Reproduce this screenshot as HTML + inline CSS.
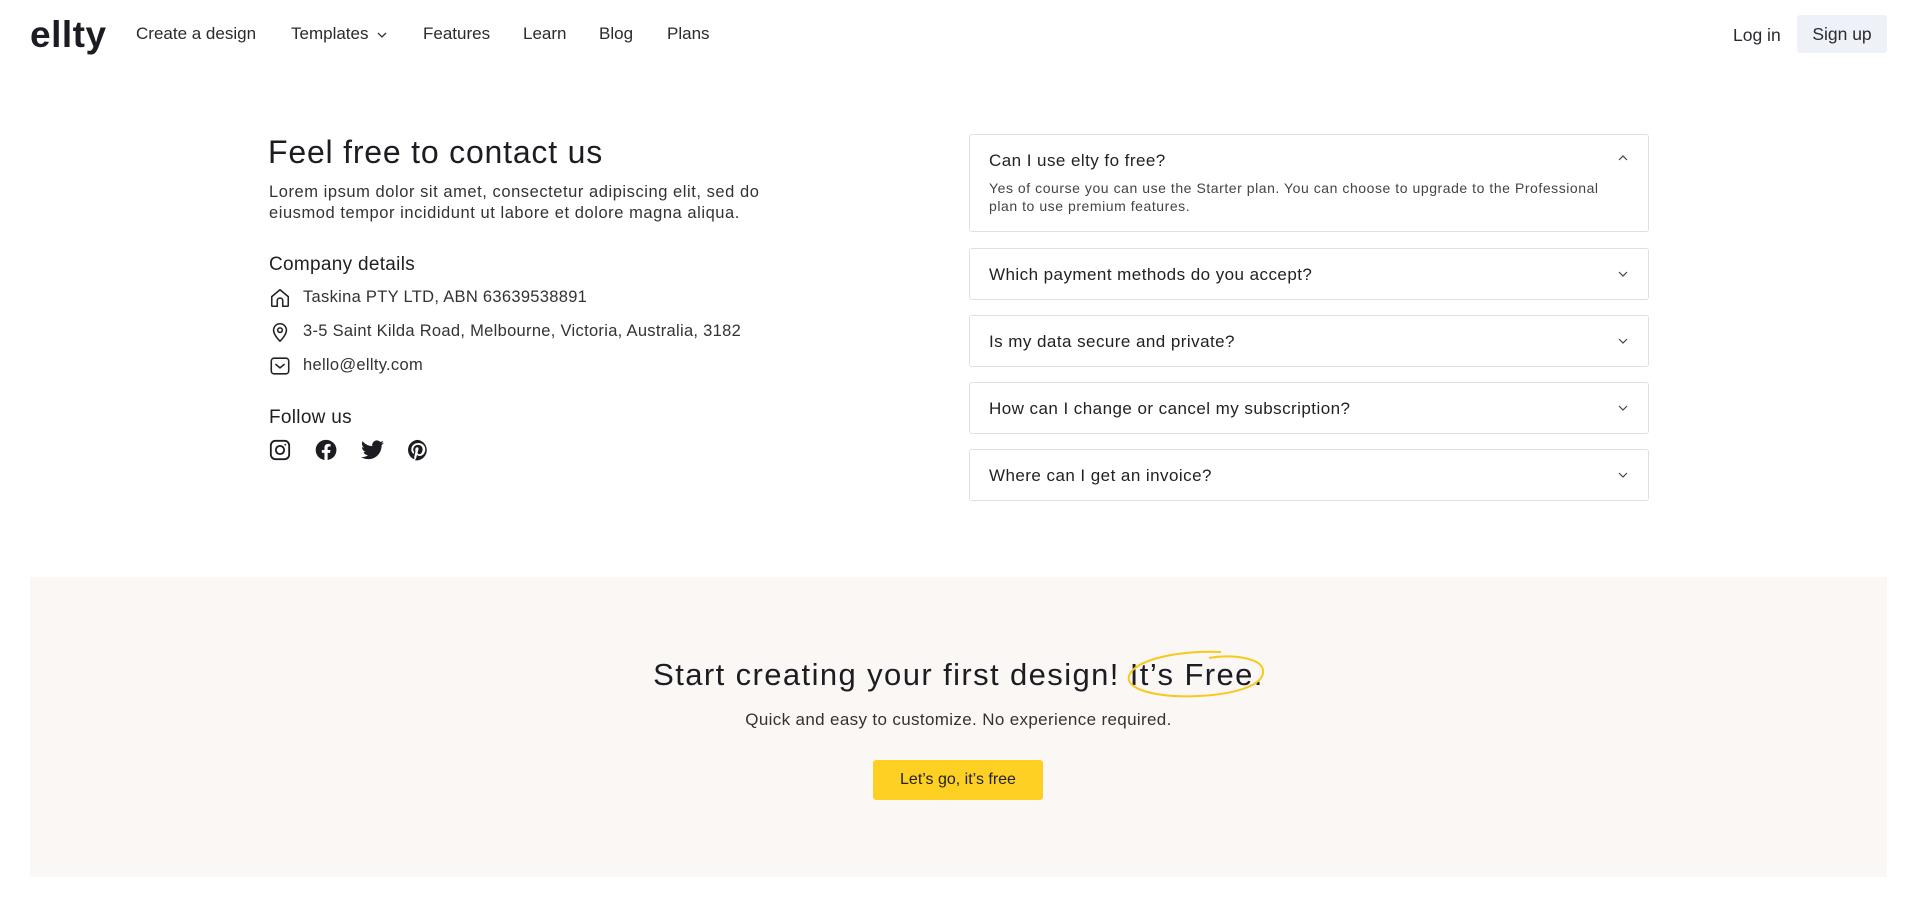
<!DOCTYPE html>
<html><head><meta charset="utf-8"><style>
*{margin:0;padding:0;box-sizing:border-box}
body{width:1917px;height:917px;background:#fff;font-family:"Liberation Sans",sans-serif;color:#1f1f24;position:relative;overflow:hidden}
.a{position:absolute;white-space:nowrap}
.nav{font-size:17px;color:#2a2a30;top:24px}
.faq{position:absolute;left:969px;width:680px;border:1px solid #dde1e7;border-radius:3px;background:#fff}
.faq .q{position:absolute;left:19px;top:16px;font-size:17px;color:#222;letter-spacing:0.45px}
.faq svg{position:absolute;right:22px;top:21px}
.li{font-size:16.5px;color:#333;letter-spacing:0.3px}
</style></head><body>
<div class="a" style="left:30px;top:14px;font-size:37px;font-weight:bold;letter-spacing:0.5px;color:#1c1c22">ellty</div>
<div class="a nav" style="left:136px">Create a design</div>
<div class="a nav" style="left:291px">Templates <svg width="10" height="8" viewBox="0 0 10 8" style="margin-left:4px"><path d="M1 2l4 4 4-4" fill="none" stroke="#333" stroke-width="1.3"/></svg></div>
<div class="a nav" style="left:423px">Features</div>
<div class="a nav" style="left:523px">Learn</div>
<div class="a nav" style="left:599px">Blog</div>
<div class="a nav" style="left:667px">Plans</div>
<div class="a nav" style="left:1733px;font-size:17.5px;top:25px">Log in</div>
<div class="a" style="left:1797px;top:15px;width:90px;height:38px;background:#eef1f8;border-radius:3px;font-size:17.5px;line-height:38px;text-align:center;color:#2a2a30">Sign up</div>

<div class="a" style="left:268px;top:134px;font-size:32px;letter-spacing:0.8px;color:#1c1c22">Feel free to contact us</div>
<div class="a" style="left:269px;top:182px;font-size:16.5px;line-height:21px;color:#333;letter-spacing:0.55px">Lorem ipsum dolor sit amet, consectetur adipiscing elit, sed do<br>eiusmod tempor incididunt ut labore et dolore magna aliqua.</div>
<div class="a" style="left:269px;top:254px;font-size:19px;letter-spacing:0.3px">Company details</div>
<svg class="a" style="left:269px;top:287px" width="22" height="22" viewBox="0 0 24 24" fill="none" stroke="#222" stroke-width="1.7" stroke-linejoin="round"><path d="M3 10.5L12 3l9 7.5V20a1 1 0 0 1-1 1h-5v-6a3 3 0 0 0-6 0v6H4a1 1 0 0 1-1-1z"/></svg>
<div class="a li" style="left:303px;top:288px">Taskina PTY LTD, ABN 63639538891</div>
<svg class="a" style="left:269px;top:320px" width="22" height="24" viewBox="0 0 24 24" fill="none" stroke="#222" stroke-width="1.7"><path d="M12 22s7-6.5 7-12a7 7 0 0 0-14 0c0 5.5 7 12 7 12z"/><circle cx="12" cy="10" r="2.5"/></svg>
<div class="a li" style="left:303px;top:322px">3-5 Saint Kilda Road, Melbourne, Victoria, Australia, 3182</div>
<svg class="a" style="left:269px;top:355px" width="22" height="22" viewBox="0 0 24 24" fill="none" stroke="#222" stroke-width="1.7"><rect x="2.5" y="3.5" width="19" height="17" rx="3"/><path d="M7 10l5 4 5-4"/></svg>
<div class="a li" style="left:303px;top:356px">hello@ellty.com</div>
<div class="a" style="left:269px;top:407px;font-size:19px;letter-spacing:0.3px">Follow us</div>
<svg class="a" style="left:269px;top:439px" width="22" height="22" viewBox="0 0 24 24" fill="none" stroke="#1c1c22" stroke-width="2"><rect x="2" y="2" width="20" height="20" rx="5"/><circle cx="12" cy="12" r="4.5"/><circle cx="17.8" cy="6.2" r="1" fill="#1c1c22" stroke="none"/></svg>
<svg class="a" style="left:315px;top:439px" width="22" height="22" viewBox="0 0 24 24"><path fill="#1c1c22" d="M12 1a11 11 0 0 0-1.7 21.9v-7.7H7.5V12h2.8V9.6c0-2.8 1.7-4.3 4.2-4.3 1.2 0 2.5.2 2.5.2v2.7h-1.4c-1.4 0-1.8.9-1.8 1.8V12h3.1l-.5 3.2h-2.6v7.7A11 11 0 0 0 12 1z"/></svg>
<svg class="a" style="left:361px;top:440px" width="23" height="20" viewBox="0 0 24 20"><path fill="#1c1c22" d="M24 2.4a9.8 9.8 0 0 1-2.8.8A4.9 4.9 0 0 0 23.3.4a9.8 9.8 0 0 1-3.1 1.2A4.9 4.9 0 0 0 11.8 6 14 14 0 0 1 1.7.9a4.9 4.9 0 0 0 1.5 6.6 4.9 4.9 0 0 1-2.2-.6v.1a4.9 4.9 0 0 0 3.9 4.8 4.9 4.9 0 0 1-2.2.1 4.9 4.9 0 0 0 4.6 3.4A9.900 9.900 0 0 1 0 17.3 14 14 0 0 0 7.5 19.5c9.1 0 14-7.5 14-14v-.6A10 10 0 0 0 24 2.4z"/></svg>
<svg class="a" style="left:407px;top:439px" width="22" height="22" viewBox="0 0 24 24"><path fill="#1c1c22" d="M12 1a11 11 0 0 0-4 21.2c-.1-.9-.2-2.2 0-3.2l1.3-5.5s-.3-.7-.3-1.7c0-1.6.9-2.8 2.1-2.8 1 0 1.5.7 1.5 1.6 0 1-.6 2.500-1 3.9-.3 1.2.6 2.1 1.7 2.1 2.1 0 3.7-2.2 3.7-5.4 0-2.8-2-4.8-4.9-4.8-3.4 0-5.3 2.5-5.3 5.1 0 1 .4 2.1.9 2.7.1.1.1.2.1.3l-.3 1.4c-.1.2-.2.3-.4.2-1.5-.7-2.4-2.9-2.4-4.6 0-3.8 2.7-7.2 7.900-7.2 4.1 0 7.3 2.9 7.3 6.9 0 4.1-2.6 7.4-6.2 7.4-1.2 0-2.4-.6-2.7-1.4l-.8 2.8c-.3 1.1-1 2.4-1.5 3.2A11 11 0 1 0 12 1z"/></svg>

<div class="faq" style="top:134px;height:98px">
<div class="q">Can I use elty fo free?</div>
<svg width="10" height="8" viewBox="0 0 10 8" style="top:19px;right:20px"><path d="M1 6l4-4 4 4" fill="none" stroke="#444" stroke-width="1.2"/></svg>
<div class="a" style="left:19px;top:44px;font-size:14px;line-height:18px;color:#444;letter-spacing:0.55px">Yes of course you can use the Starter plan. You can choose to upgrade to the Professional<br>plan to use premium features.</div>
</div>
<div class="faq" style="top:248px;height:52px"><div class="q">Which payment methods do you accept?</div><svg width="10" height="8" viewBox="0 0 10 8" style="right:20px"><path d="M1 2l4 4 4-4" fill="none" stroke="#444" stroke-width="1.2"/></svg></div>
<div class="faq" style="top:315px;height:52px"><div class="q">Is my data secure and private?</div><svg width="10" height="8" viewBox="0 0 10 8" style="right:20px"><path d="M1 2l4 4 4-4" fill="none" stroke="#444" stroke-width="1.2"/></svg></div>
<div class="faq" style="top:382px;height:52px"><div class="q">How can I change or cancel my subscription?</div><svg width="10" height="8" viewBox="0 0 10 8" style="right:20px"><path d="M1 2l4 4 4-4" fill="none" stroke="#444" stroke-width="1.2"/></svg></div>
<div class="faq" style="top:449px;height:52px"><div class="q">Where can I get an invoice?</div><svg width="10" height="8" viewBox="0 0 10 8" style="right:20px"><path d="M1 2l4 4 4-4" fill="none" stroke="#444" stroke-width="1.2"/></svg></div>

<div class="a" style="left:30px;top:577px;width:1857px;height:300px;background:#fbf7f4"></div>
<div class="a" style="left:0;width:1917px;top:657px;text-align:center;font-size:31px;letter-spacing:1.4px;color:#1c1c22">Start creating your first design! It’s Free.</div>
<svg class="a" style="left:1125px;top:648px" width="144" height="54" viewBox="0 0 144 54" fill="none" stroke="#f8c91c" stroke-width="2"><path d="M96 4C60 2 10 10 4 28c-4 14 30 22 70 20 40-2 66-12 64-26-2-12-30-16-54-12"/></svg>
<div class="a" style="left:0;width:1917px;top:710px;text-align:center;font-size:17px;letter-spacing:0.35px;color:#333">Quick and easy to customize. No experience required.</div>
<div class="a" style="left:873px;top:760px;width:170px;height:40px;background:#fdd023;border-radius:3px;text-align:center;line-height:40px;font-size:16px;color:#222">Let’s go, it’s free</div>
</body></html>
